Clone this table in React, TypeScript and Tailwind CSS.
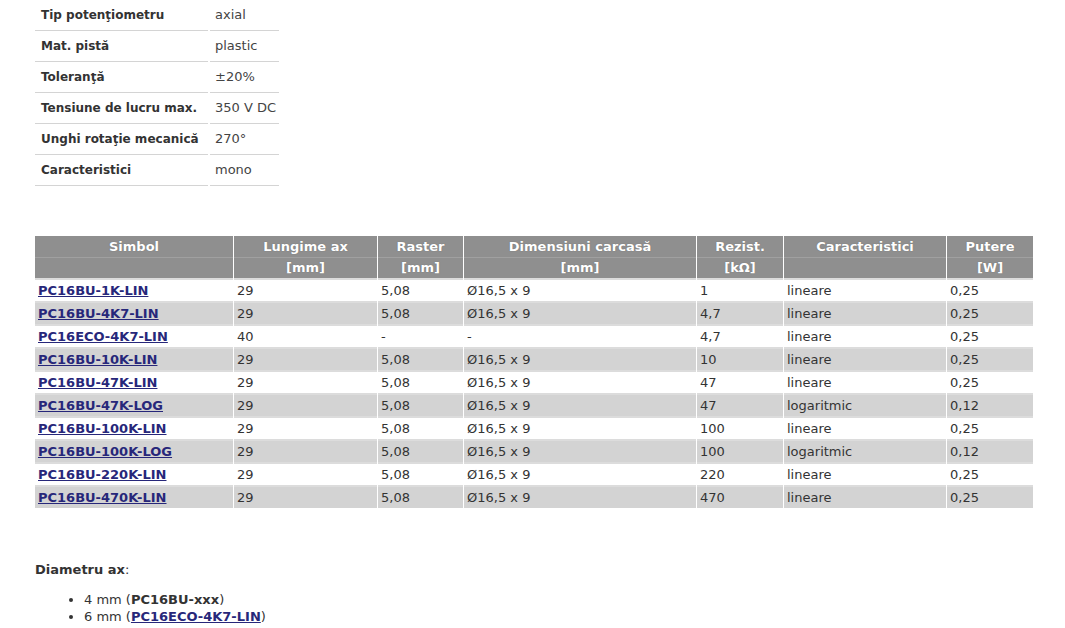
const specs = [
  ["Tip potenţiometru", "axial"],
  ["Mat. pistă", "plastic"],
  ["Toleranţă", "±20%"],
  ["Tensiune de lucru max.", "350 V DC"],
  ["Unghi rotaţie mecanică", "270°"],
  ["Caracteristici", "mono"],
];

const rows = [
  ["PC16BU-1K-LIN", "29", "5,08", "Ø16,5 x 9", "1", "lineare", "0,25"],
  ["PC16BU-4K7-LIN", "29", "5,08", "Ø16,5 x 9", "4,7", "lineare", "0,25"],
  ["PC16ECO-4K7-LIN", "40", "-", "-", "4,7", "lineare", "0,25"],
  ["PC16BU-10K-LIN", "29", "5,08", "Ø16,5 x 9", "10", "lineare", "0,25"],
  ["PC16BU-47K-LIN", "29", "5,08", "Ø16,5 x 9", "47", "lineare", "0,25"],
  ["PC16BU-47K-LOG", "29", "5,08", "Ø16,5 x 9", "47", "logaritmic", "0,12"],
  ["PC16BU-100K-LIN", "29", "5,08", "Ø16,5 x 9", "100", "lineare", "0,25"],
  ["PC16BU-100K-LOG", "29", "5,08", "Ø16,5 x 9", "100", "logaritmic", "0,12"],
  ["PC16BU-220K-LIN", "29", "5,08", "Ø16,5 x 9", "220", "lineare", "0,25"],
  ["PC16BU-470K-LIN", "29", "5,08", "Ø16,5 x 9", "470", "lineare", "0,25"],
];

const cols = [
  { title: "Simbol", unit: "", w: "w-[198px]" },
  { title: "Lungime ax", unit: "[mm]", w: "w-[143px]" },
  { title: "Raster", unit: "[mm]", w: "w-[85px]" },
  { title: "Dimensiuni carcasă", unit: "[mm]", w: "w-[232px]" },
  { title: "Rezist.", unit: "[kΩ]", w: "w-[86px]" },
  { title: "Caracteristici", unit: "", w: "w-[162px]" },
  { title: "Putere", unit: "[W]", w: "w-[86px]" },
];

const linkCls = "font-bold text-[#27277a] underline";

export default function App() {
  return (
    <div className="min-h-[628px] bg-white pl-[35px] text-[13px] text-[#333] [font-family:'DejaVu_Sans',Verdana,sans-serif]">
      <table className="-ml-[2px] table-fixed border-separate border-spacing-x-[2px] border-spacing-y-0">
        <tbody>
          {specs.map(([k, v]) => (
            <tr key={k} className="h-[31px]">
              <td className="w-[173px] whitespace-nowrap border-b border-[#d4d4d4] pl-[6px] text-[12px] font-bold text-[#333]">{k}</td>
              <td className="w-[69px] whitespace-nowrap border-b border-[#d4d4d4] pl-[5px] text-[#444]">{v}</td>
            </tr>
          ))}
        </tbody>
      </table>

      <table className="mt-[50px] -ml-px border-separate border-spacing-x-px border-spacing-y-0">
        <thead>
          <tr className="h-[21px] bg-[#8f8f8f] text-white">
            {cols.map((c) => (
              <th key={c.title} className={`${c.w} text-center font-bold [text-shadow:0_0_1px_#666]`}>{c.title}</th>
            ))}
          </tr>
          <tr className="h-[21px] bg-[#8f8f8f] text-white">
            {cols.map((c) => (
              <th key={c.title} className="border-t border-[#a0a0a0] text-center font-bold [text-shadow:0_0_1px_#666]">{c.unit}</th>
            ))}
          </tr>
        </thead>
        <tbody>
          {rows.map((r, i) => (
            <tr key={r[0]} className={`h-[23px] ${i % 2 === 1 ? "bg-[#d3d3d3]" : "bg-white"}`}>
              {r.map((cell, j) => (
                <td key={j} className="border-t-2 border-[#dcdcdc] pl-[3px] align-middle text-[#333]">
                  {j === 0 ? <a href="#" className={linkCls}>{cell}</a> : cell}
                </td>
              ))}
            </tr>
          ))}
        </tbody>
      </table>

      <div className="mt-[52px] font-bold">
        Diametru ax<span className="font-normal">:</span>
      </div>
      <ul className="mt-[11px] list-disc pl-[49px] leading-[17px]">
        <li>4 mm (<b>PC16BU-xxx</b>)</li>
        <li>6 mm (<a href="#" className={linkCls}>PC16ECO-4K7-LIN</a>)</li>
      </ul>
    </div>
  );
}
